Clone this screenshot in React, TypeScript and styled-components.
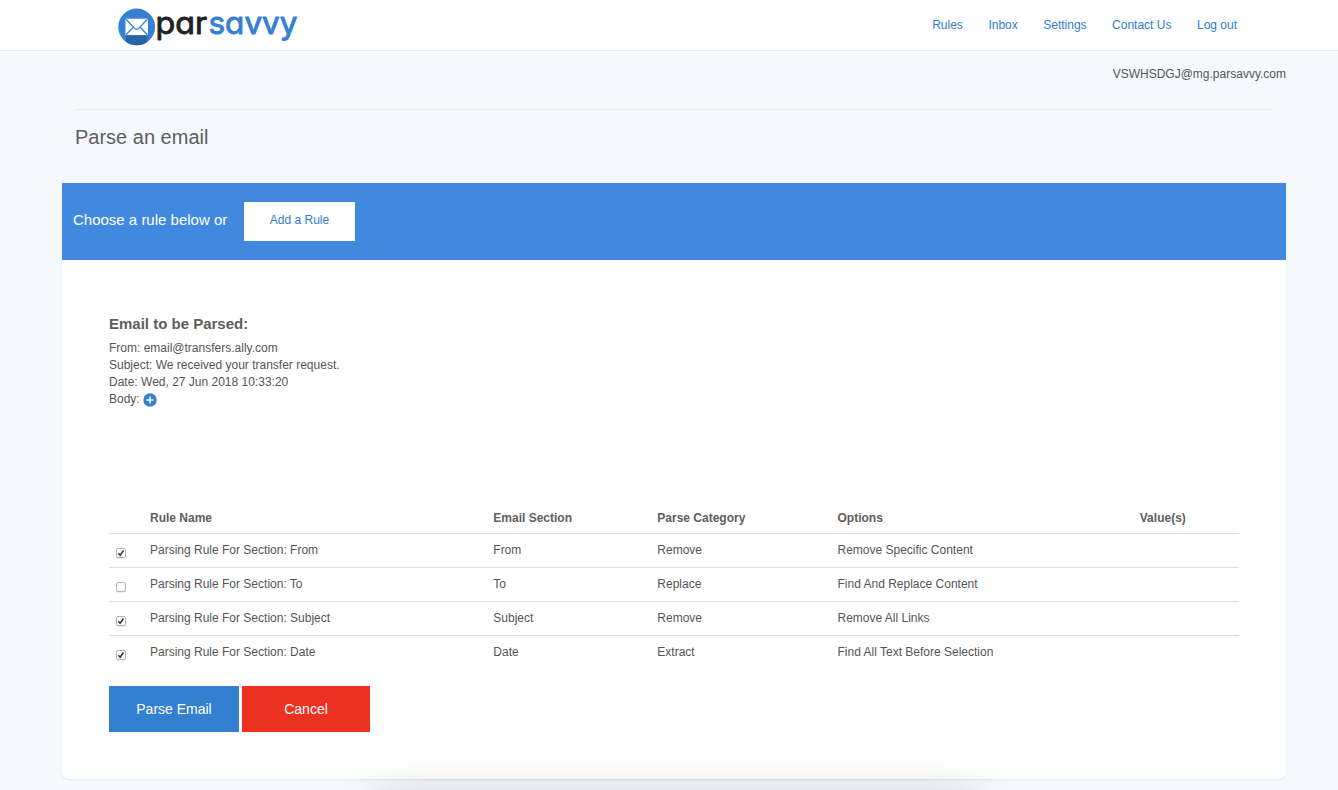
import React, { useState } from 'react';
import styled, { createGlobalStyle } from 'styled-components';

const GlobalStyle = createGlobalStyle`
  * { box-sizing: border-box; }
  html, body { margin: 0; padding: 0; }
  body {
    background: #f5f8fd;
    color: #555555;
    font-family: "Liberation Sans", Arial, Helvetica, sans-serif;
    font-size: 12px;
    line-height: 17px;
    overflow: hidden;
  }
`;

const Page = styled.div`
  position: relative;
  height: 790px;
  overflow: hidden;
`;

const Header = styled.header`
  display: flex;
  justify-content: space-between;
  height: 51px;
  padding: 0 101px 0 117px;
  background: #fff;
  border-bottom: 1px solid #e4e7ea;
`;

const Nav = styled.nav`
  display: flex;
  gap: 25.5px;
  padding-top: 17px;
`;

const NavLink = styled.a`
  color: #2e7cd0;
  text-decoration: none;
`;

const Account = styled.div`
  padding: 15px 52px 0 0;
  text-align: right;
`;

const TitleBlock = styled.div`
  margin: 26px 66px 0 75px;
  height: 74px;
  border-top: 1px solid #e9edf1;
`;

const Title = styled.h1`
  margin: 15px 0 0;
  font-size: 20px;
  line-height: 24px;
  font-weight: 400;
  color: #5e5e5e;
`;

const Card = styled.main`
  width: 1224px;
  height: 596px;
  margin-left: 62px;
  background: #fff;
  border-radius: 0 0 7px 7px;
  box-shadow: 0 1px 2px rgba(0, 0, 0, 0.09);
`;

const Banner = styled.div`
  display: flex;
  align-items: flex-start;
  height: 77px;
  padding: 19px 11px;
  background: #4089de;
`;

const BannerText = styled.span`
  width: 171px;
  padding-top: 9px;
  color: #fff;
  font-size: 15px;
  line-height: 18px;
`;

const AddButton = styled.button`
  width: 111px;
  height: 39px;
  padding: 0 0 2px;
  border: 0;
  background: #fff;
  color: #2e7cd0;
  font: inherit;
`;

const Content = styled.div`
  padding: 55px 47px 0;
`;

const SectionTitle = styled.h2`
  margin: 0 0 7px;
  font-size: 15px;
  line-height: 18px;
  font-weight: 700;
  color: #5e5e5e;
`;

const Detail = styled.div`
  display: flex;
  height: 17px;
  line-height: 17px;
`;

const PlusIcon = styled.svg`
  margin: 2px 0 0 3px;
`;

const Table = styled.table`
  width: 1130px;
  margin-top: 95px;
  border-collapse: separate;
  border-spacing: 0;
  table-layout: fixed;
`;

const HeadCell = styled.th<{ $w: number }>`
  width: ${(p) => p.$w}px;
  height: 31px;
  padding: 0 0 0 8px;
  border-bottom: 1px solid #dddddd;
  text-align: left;
  font-weight: 700;
  color: #5e5e5e;
`;

const Row = styled.tr`
  &:not(:last-child) td { border-bottom: 1px solid #dddddd; }
`;

const Cell = styled.td`
  height: 34px;
  padding: 8px 0 0 8px;
  vertical-align: top;
`;

const Check = styled.input`
  appearance: none;
  display: block;
  width: 10px;
  height: 10px;
  margin: 6px 0 0 -1px;
  border: 1px solid #b4b4b4;
  border-radius: 2px;
  background: #fff;
  box-shadow: 0 1px 1px rgba(0, 0, 0, 0.08);
  &:checked {
    background: #fff url("data:image/svg+xml,%3Csvg xmlns='http://www.w3.org/2000/svg' viewBox='0 0 8 8'%3E%3Cpath d='M1.4 4.3 3.1 6.2 6.5 1.5' fill='none' stroke='%23333' stroke-width='1.5'/%3E%3C/svg%3E") center / 8px 8px;
  }
`;

const Actions = styled.div`
  display: flex;
  gap: 3px;
  margin-top: 16px;
`;

const ActionButton = styled.button<{ $danger?: boolean }>`
  width: ${(p) => (p.$danger ? 128 : 130)}px;
  height: 46px;
  padding: 0;
  border: 0;
  background: ${(p) => (p.$danger ? '#ed3224' : '#337fd0')};
  color: #fff;
  font: 14px "Liberation Sans", Arial, sans-serif;
`;

/* Soft shade rising from the bottom edge of the window */
const BottomShade = styled.div`
  position: absolute;
  left: 382px;
  top: 796px;
  width: 588px;
  height: 60px;
  box-shadow: 0 0 40px 6px rgba(0, 0, 0, 0.13);
  pointer-events: none;
`;

const Wordmark = styled.text`
  font-family: Inter, Lato, sans-serif;
  font-size: 31px;
  font-weight: 400;
  font-feature-settings: "cv11";
  stroke-width: 0.9px;
  stroke-linejoin: round;
`;

const Logo = () => (
  <svg width="184" height="50" viewBox="0 0 184 50" role="img" aria-label="parsavvy">
    <defs>
      <clipPath id="disc"><circle cx="19.7" cy="26.9" r="18.4" /></clipPath>
    </defs>
    <circle cx="19.7" cy="26.9" r="18.4" fill="#3580d2" />
    <rect x="9" y="35" width="21.5" height="11" fill="#2764a4" clipPath="url(#disc)" />
    <rect x="8.5" y="18.7" width="22.4" height="16.4" fill="#fff" />
    <path d="M9 19.2 17.6 28.4Q19.7 30.4 21.8 28.4L30.4 19.2M9 34.7 16.3 27.3M30.4 34.7 23.1 27.3" fill="none" stroke="#3580d2" strokeWidth="1.3" />
    <Wordmark x="38.5" y="34" textLength="51.5" lengthAdjust="spacingAndGlyphs" fill="#222" stroke="#222">par</Wordmark>
    <Wordmark x="91.5" y="34" textLength="89" lengthAdjust="spacingAndGlyphs" fill="#3580d2" stroke="#3580d2">savvy</Wordmark>
  </svg>
);

const links = ['Rules', 'Inbox', 'Settings', 'Contact Us', 'Log out'];

const columns = [
  { label: '', width: 33 },
  { label: 'Rule Name', width: 343.3 },
  { label: 'Email Section', width: 164 },
  { label: 'Parse Category', width: 180.2 },
  { label: 'Options', width: 302.3 },
  { label: 'Value(s)', width: 107.2 },
];

const initialRules = [
  { checked: true, section: 'From', category: 'Remove', option: 'Remove Specific Content' },
  { checked: false, section: 'To', category: 'Replace', option: 'Find And Replace Content' },
  { checked: true, section: 'Subject', category: 'Remove', option: 'Remove All Links' },
  { checked: true, section: 'Date', category: 'Extract', option: 'Find All Text Before Selection' },
];

export default function App() {
  const [rules, setRules] = useState(initialRules);
  const toggle = (index: number) =>
    setRules(rules.map((r, i) => (i === index ? { ...r, checked: !r.checked } : r)));

  return (
    <Page>
      <GlobalStyle />
      <Header>
        <Logo />
        <Nav>{links.map((l) => <NavLink key={l} href="#">{l}</NavLink>)}</Nav>
      </Header>
      <Account>VSWHSDGJ@mg.parsavvy.com</Account>
      <TitleBlock><Title>Parse an email</Title></TitleBlock>
      <Card>
        <Banner>
          <BannerText>Choose a rule below or</BannerText>
          <AddButton>Add a Rule</AddButton>
        </Banner>
        <Content>
          <SectionTitle>Email to be Parsed:</SectionTitle>
          <Detail>From: email@transfers.ally.com</Detail>
          <Detail>Subject: We received your transfer request.</Detail>
          <Detail>Date: Wed, 27 Jun 2018 10:33:20</Detail>
          <Detail>
            Body:
            <PlusIcon width="14" height="14" viewBox="0 0 14 14">
              <circle cx="7" cy="7" r="6.7" fill="#337fd0" />
              <path d="M7 3.5v7M3.5 7h7" stroke="#fff" strokeWidth="1.5" />
            </PlusIcon>
          </Detail>
          <Table>
            <thead>
              <tr>{columns.map((c) => <HeadCell key={c.label} $w={c.width}>{c.label}</HeadCell>)}</tr>
            </thead>
            <tbody>
              {rules.map((r, i) => (
                <Row key={r.section}>
                  <Cell><Check type="checkbox" checked={r.checked} onChange={() => toggle(i)} /></Cell>
                  <Cell>Parsing Rule For Section: {r.section}</Cell>
                  <Cell>{r.section}</Cell>
                  <Cell>{r.category}</Cell>
                  <Cell>{r.option}</Cell>
                  <Cell />
                </Row>
              ))}
            </tbody>
          </Table>
          <Actions>
            <ActionButton>Parse Email</ActionButton>
            <ActionButton $danger>Cancel</ActionButton>
          </Actions>
        </Content>
      </Card>
      <BottomShade />
    </Page>
  );
}
